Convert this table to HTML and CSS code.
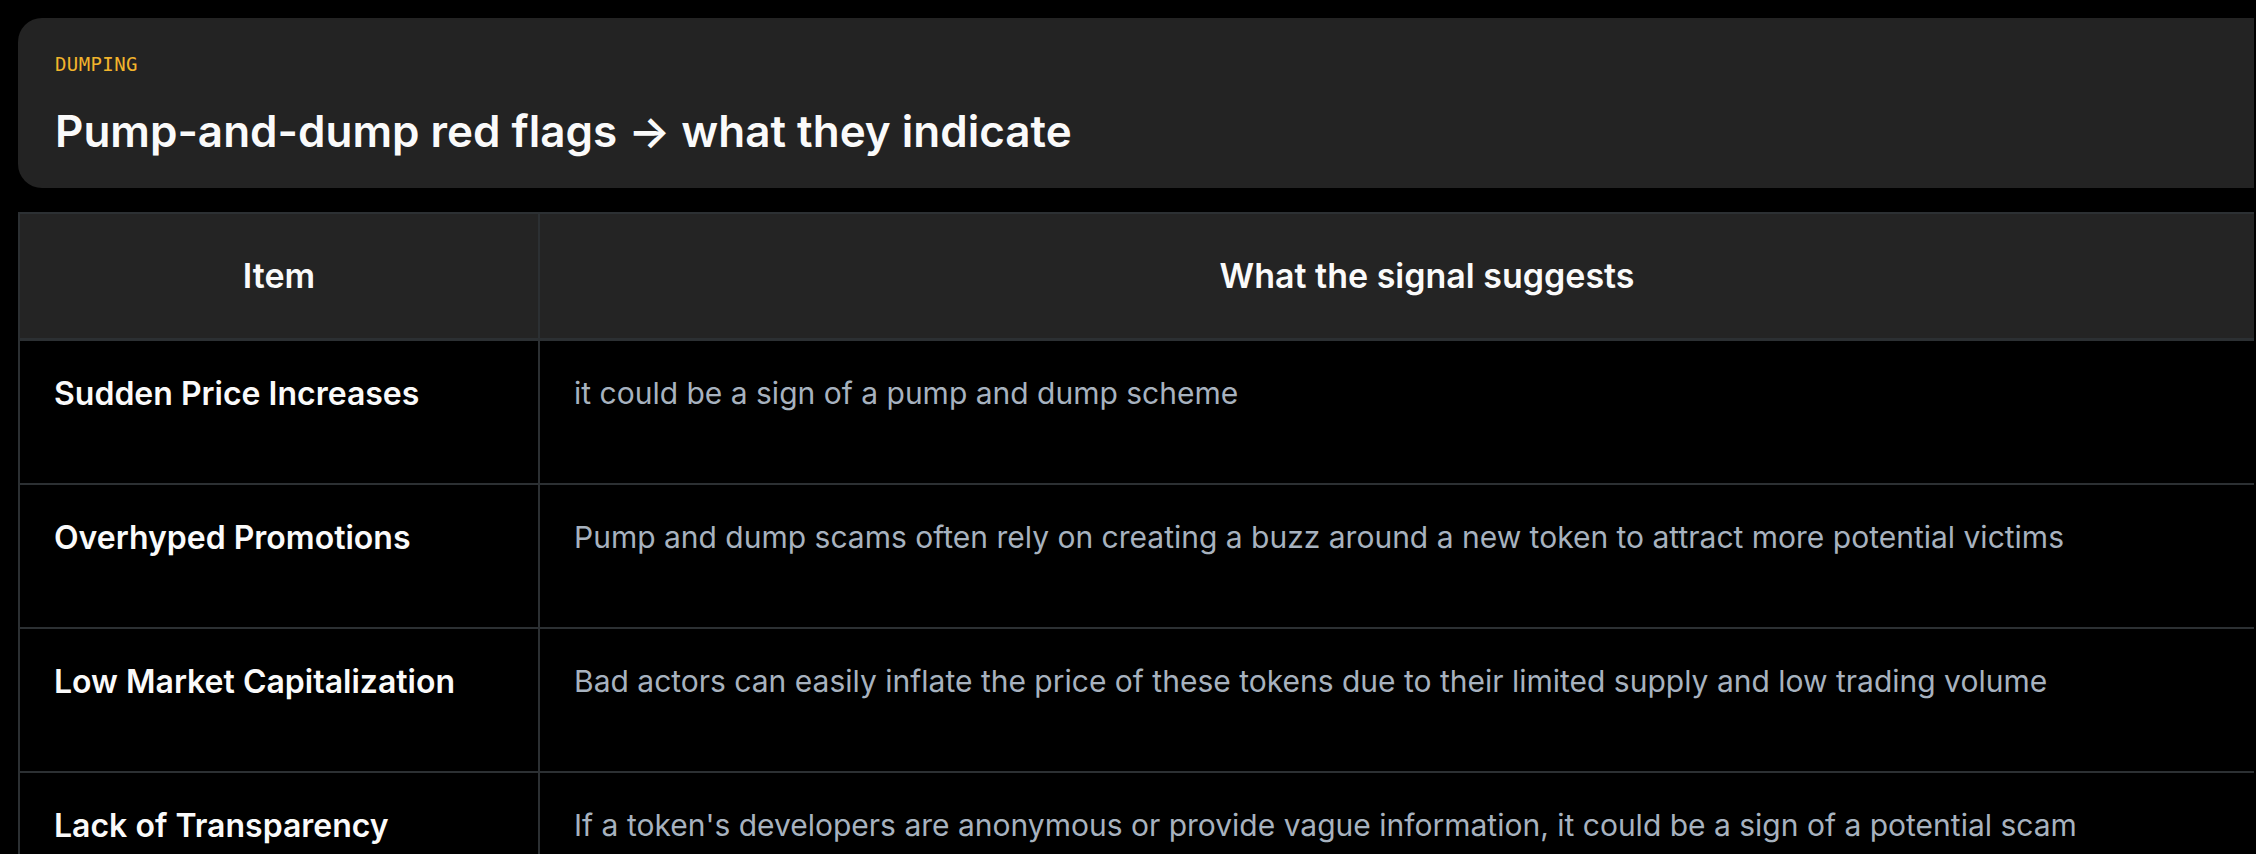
FILE: index.html
```html
<!DOCTYPE html>
<html lang="en">
<head>
    <meta charset="UTF-8">
    <meta name="viewport" content="width=device-width, initial-scale=1.0">
    <title>Dumping</title>
    <link rel="stylesheet" href="styles.css">
</head>
<body>
    <main class="page">
        <div class="sheet">
            <header class="card">
                <p class="eyebrow">DUMPING</p>
                <h1 class="title">Pump-and-dump red flags → what they indicate</h1>
            </header>
            <table class="flags">
                <thead>
                    <tr>
                        <th class="col-item">Item</th>
                        <th>What the signal suggests</th>
                    </tr>
                </thead>
                <tbody>
                    <tr>
                        <td class="col-item">Sudden Price Increases</td>
                        <td>it could be a sign of a pump and dump scheme</td>
                    </tr>
                    <tr>
                        <td class="col-item">Overhyped Promotions</td>
                        <td>Pump and dump scams often rely on creating a buzz around a new token to attract more potential victims</td>
                    </tr>
                    <tr>
                        <td class="col-item">Low Market Capitalization</td>
                        <td>Bad actors can easily inflate the price of these tokens due to their limited supply and low trading volume</td>
                    </tr>
                    <tr>
                        <td class="col-item">Lack of Transparency</td>
                        <td>If a token's developers are anonymous or provide vague information, it could be a sign of a potential scam</td>
                    </tr>
                </tbody>
            </table>
        </div>
    </main>
</body>
</html>
```

FILE: styles.css
```css
* {
  padding: 0;
  margin: 0;
  box-sizing: border-box;
}
html {
  font-family: Inter, 'Noto Sans', sans-serif;
  color: #fafafa;
  background-color: #000;
}
body {
  background-color: #000;
  min-height: 100vh;
}
.page {
  /* the content is wider than the window, clipped on the right */
  width: 2254px;
  padding: 18px 0 0 18px;
  overflow: hidden;
}
.sheet {
  width: 2298px;
  display: flex;
  flex-direction: column;
  gap: 24px;
}
.card {
  background-color: #232323;
  border-radius: 24px;
  padding: 34px 37px 30px;
  display: flex;
  flex-direction: column;
  gap: 29px;
}
.eyebrow {
  font-family: 'DejaVu Sans Mono', 'Liberation Mono', monospace;
  font-size: 19px;
  line-height: 24px;
  letter-spacing: 0.4px;
  color: #f2b42c;
}
.title {
  font-size: 44px;
  line-height: 1.2;
  font-weight: 600;
  color: #fafafa;
}
.flags {
  width: 100%;
  border-collapse: collapse;
  border: 2px solid #2c3033;
}
.flags th,
.flags td {
  border: 2px solid #2c3033;
}
.flags th {
  background-color: #242424;
  font-size: 34px;
  line-height: 50px;
  font-weight: 600;
  padding: 37px 34px;
  text-align: center;
  border-bottom-width: 3px;
}
.flags td {
  font-size: 30px;
  line-height: 45px;
  padding: 30px 34px 67px;
  vertical-align: top;
  color: #a7b2bf;
}
.flags .col-item {
  width: 520px;
}
.flags td.col-item {
  font-size: 32px;
  font-weight: 600;
  color: #fafafa;
}
```
